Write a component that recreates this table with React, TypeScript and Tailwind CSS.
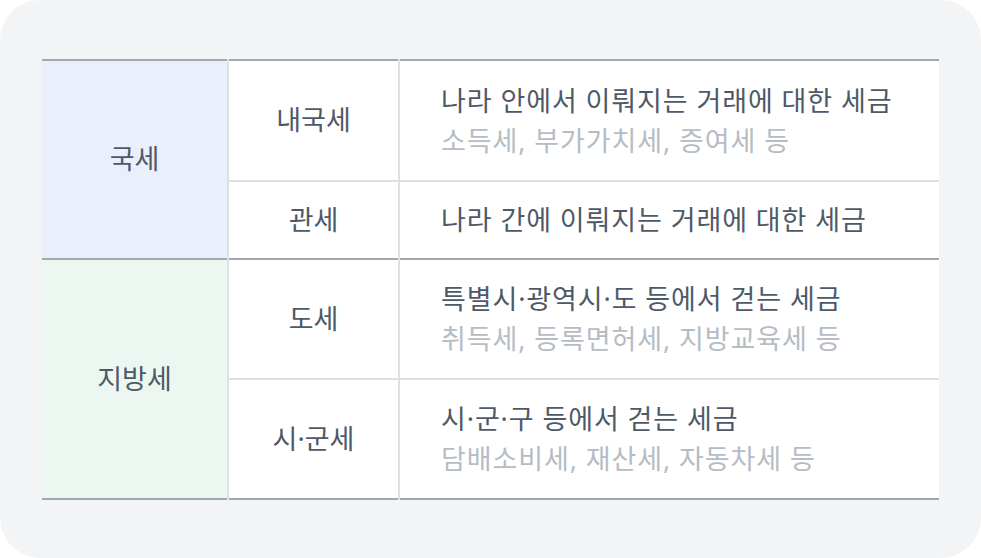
import React from 'react';

const font = { fontFamily: '"Noto Sans", "Noto Sans CJK KR", sans-serif' };

const Desc = ({ main, sub }: { main: string; sub?: string }) => (
  <td className="border-l-2 border-[#dde1e6] pl-[41px] align-middle">
    <div className="text-[27px] leading-[40px] tracking-[0.9px] text-[#4e5968]">{main}</div>
    {sub && <div className="text-[27px] leading-[40px] tracking-[0.9px] text-[#b5bcc4]">{sub}</div>}
  </td>
);

export default function App() {
  return (
    <div className="w-[981px] h-[558px] bg-white" style={font}>
      <div className="h-full w-full rounded-[40px] bg-[#f3f4f6] px-[42px] pt-[59px]">
        <table className="w-[897px] border-collapse bg-white">
          <tbody>
            <tr className="h-[121px] border-t-2 border-[#a2a8b0]">
              <td rowSpan={2} className="w-[186px] bg-[#ebeffb] text-center text-[27px] text-[#4e5968]">
                국세
              </td>
              <td className="w-[171px] border-l-2 border-[#dde1e6] text-center text-[27px] text-[#4e5968]">
                내국세
              </td>
              <Desc main="나라 안에서 이뤄지는 거래에 대한 세금" sub="소득세, 부가가치세, 증여세 등" />
            </tr>
            <tr className="h-[78px] border-t-2 border-[#dde1e6]">
              <td className="border-l-2 border-[#dde1e6] text-center text-[27px] text-[#4e5968]">관세</td>
              <Desc main="나라 간에 이뤄지는 거래에 대한 세금" />
            </tr>
            <tr className="h-[120px] border-t-2 border-[#a2a8b0]">
              <td rowSpan={2} className="bg-[#edf7f1] text-center text-[27px] text-[#4e5968]">
                지방세
              </td>
              <td className="border-l-2 border-[#dde1e6] text-center text-[27px] text-[#4e5968]">도세</td>
              <Desc main="특별시·광역시·도 등에서 걷는 세금" sub="취득세, 등록면허세, 지방교육세 등" />
            </tr>
            <tr className="h-[120px] border-t-2 border-b-2 border-t-[#dde1e6] border-b-[#a2a8b0]">
              <td className="border-l-2 border-[#dde1e6] text-center text-[27px] text-[#4e5968]">시·군세</td>
              <Desc main="시·군·구 등에서 걷는 세금" sub="담배소비세, 재산세, 자동차세 등" />
            </tr>
          </tbody>
        </table>
      </div>
    </div>
  );
}
